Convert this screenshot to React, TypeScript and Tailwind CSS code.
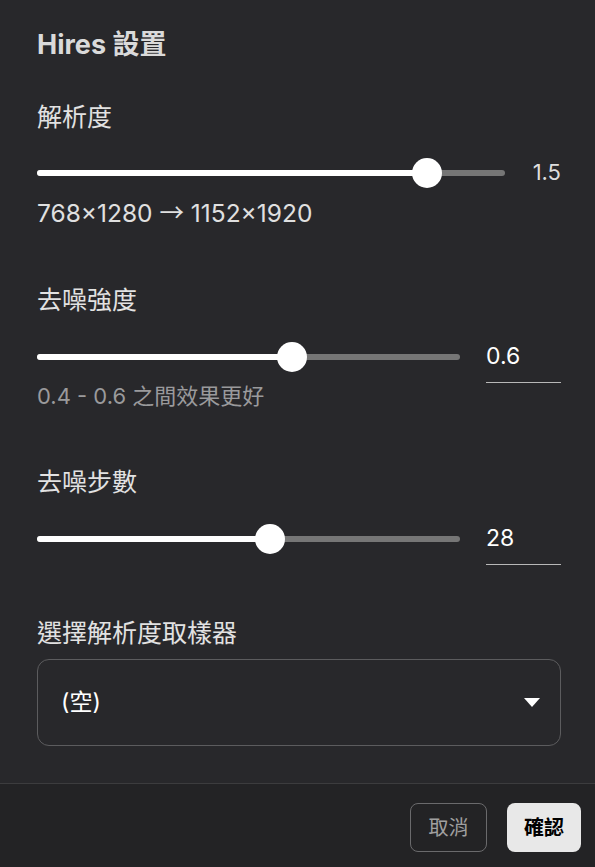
import { useState } from 'react';

const font = { fontFamily: 'Inter, "Noto Sans CJK TC", sans-serif' };

interface SliderProps {
  value: number;
  min: number;
  max: number;
}

function Slider({ value, min, max }: SliderProps) {
  const pct = ((value - min) / (max - min)) * 100;
  return (
    <div className="relative h-[30px] flex-1">
      <div className="absolute left-0 right-0 top-[12px] h-[6px] rounded-full bg-[#767676]" />
      <div
        className="absolute left-0 top-[12px] h-[6px] rounded-full bg-white"
        style={{ width: `${pct}%` }}
      />
      <div
        className="absolute top-0 h-[30px] w-[30px] -translate-x-1/2 rounded-full bg-white"
        style={{ left: `${pct}%` }}
      />
    </div>
  );
}

function Label({ children }: { children: React.ReactNode }) {
  return <div className="text-[25px] leading-[32px] text-[#e2e2e2]">{children}</div>;
}

function ValueInput({ value }: { value: string }) {
  return (
    <div className="ml-[26px] flex h-[53px] w-[75px] items-center border-b border-[#b8b8b8] text-[23px] text-white">
      {value}
    </div>
  );
}

export default function App() {
  const [strength] = useState(0.6);
  const [steps] = useState(28);

  return (
    <div className="flex h-[867px] w-[595px] flex-col bg-[#28282b]" style={font}>
      <div className="flex flex-1 flex-col pl-[37px] pr-[34px] pt-[30px]">
        <h2 className="text-[27px] font-bold leading-[30px] text-[#dadada]">Hires 設置</h2>

        <div className="mt-[41px]">
          <Label>解析度</Label>
        </div>
        <div className="mt-[23px] flex items-center">
          <Slider value={1.5} min={1} max={1.6} />
          <div className="w-[56px] text-right text-[22px] text-[#dedede]">1.5</div>
        </div>
        <div className="mt-[9px] text-[24.5px] leading-[28px] text-[#e0e0e0]">
          768×1280 <span style={{ fontFamily: '"Noto Sans CJK TC", sans-serif' }}>→</span> 1152×1920
        </div>

        <div className="mt-[57px]">
          <Label>去噪強度</Label>
        </div>
        <div className="mt-[14px] flex items-center">
          <Slider value={strength} min={0} max={0.995} />
          <ValueInput value={strength.toFixed(1)} />
        </div>
        <div className="text-[22px] leading-[26px] text-[#9a9a9c]">0.4 - 0.6 之間效果更好</div>

        <div className="mt-[57px]">
          <Label>去噪步數</Label>
        </div>
        <div className="mt-[14px] flex items-center">
          <Slider value={steps} min={0} max={50.8} />
          <ValueInput value={String(steps)} />
        </div>

        <div className="mt-[52px]">
          <Label>選擇解析度取樣器</Label>
        </div>
        <div className="mt-[10px] flex h-[87px] items-center justify-between rounded-[12px] border border-[#5c5c5e] pl-[23px] pr-[20px]">
          <span className="text-[23px] text-white">(空)</span>
          <svg width="16" height="9" viewBox="0 0 16 9">
            <path d="M0 0 L16 0 L8 9 Z" fill="#ffffff" />
          </svg>
        </div>
      </div>

      <div className="flex h-[84px] items-start justify-end gap-[20px] border-t border-[#3c3c3e] bg-[#232325] pr-[14px] pt-[19px]">
        <button className="h-[49px] w-[77px] rounded-[8px] border border-[#6a6a6c] text-[20px] text-[#a0a0a0]">
          取消
        </button>
        <button className="h-[49px] w-[74px] rounded-[8px] bg-[#e8e8e8] text-[20px] font-bold text-black">
          確認
        </button>
      </div>
    </div>
  );
}
